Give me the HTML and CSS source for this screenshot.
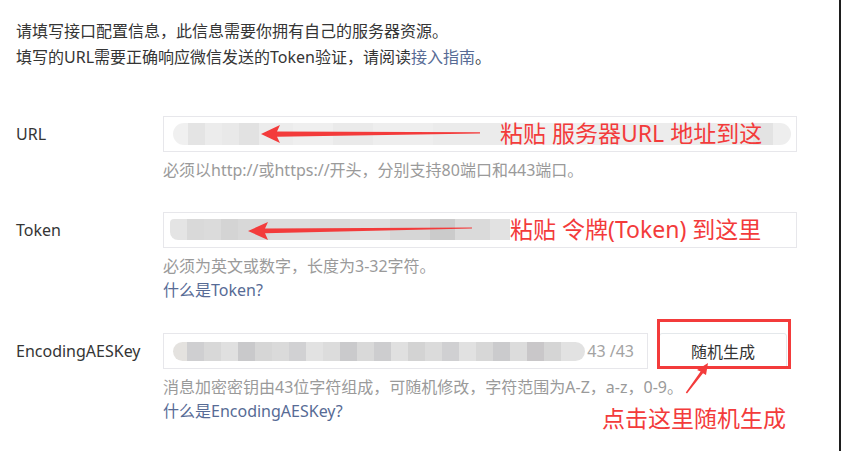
FILE: index.html
```html
<!DOCTYPE html>
<html lang="zh-CN">
<head>
    <meta charset="UTF-8">
    <meta name="viewport" content="width=device-width, initial-scale=1.0">
    <title>服务器配置</title>
    <link rel="stylesheet" href="styles.css">
</head>
<body>
    <div class="page">
        <div class="intro">
            <p>请填写接口配置信息，此信息需要你拥有自己的服务器资源。</p>
            <p>填写的URL需要正确响应微信发送的Token验证，请阅读<a href="#">接入指南</a>。</p>
        </div>

        <div class="form">
            <div class="row">
                <label class="label">URL</label>
                <div class="field">
                    <div class="input">
                        <div class="blur blur-url"></div>
                        <svg class="arrow arrow-url" width="225" height="24" viewBox="0 0 225 24">
                            <polygon points="2,12 21,3 18,9.5 221,10.3 221,11.5 18,14.8 21,21"/>
                        </svg>
                        <span class="note note-url">粘贴 服务器URL 地址到这</span>
                    </div>
                    <p class="tip">必须以http://或https://开头，分别支持80端口和443端口。</p>
                </div>
            </div>

            <div class="row">
                <label class="label">Token</label>
                <div class="field">
                    <div class="input">
                        <div class="blur blur-token"></div>
                        <svg class="arrow arrow-token" width="230" height="26" viewBox="0 0 230 26">
                            <polygon points="2,13 22,4 19,10.5 226,9.4 226,10.6 19,15.2 22,22"/>
                        </svg>
                        <span class="note note-token">粘贴 令牌(Token) 到这里</span>
                    </div>
                    <p class="tip">必须为英文或数字，长度为3-32字符。</p>
                    <a class="tip-link" href="#">什么是Token?</a>
                </div>
            </div>

            <div class="row">
                <label class="label">EncodingAESKey</label>
                <div class="field">
                    <div class="field-line">
                        <div class="input input-aes">
                            <div class="blur blur-aes"></div>
                            <span class="counter">43 /43</span>
                        </div>
                        <div class="btn-wrap">
                            <button class="btn" type="button">随机生成</button>
                            <span class="mark"></span>
                        </div>
                    </div>
                    <p class="tip">消息加密密钥由43位字符组成，可随机修改，字符范围为A-Z，a-z，0-9。</p>
                    <a class="tip-link" href="#">什么是EncodingAESKey?</a>
                </div>
            </div>
        </div>

        <div class="callout">
            <svg class="callout-arrow" width="35" height="40" viewBox="0 0 35 40">
                <polygon points="28,5 26,17 23,15.2 7,35.5 5.8,34.6 20.6,13.6 17,12"/>
            </svg>
            <span class="callout-text">点击这里随机生成</span>
        </div>
    </div>
</body>
</html>
```

FILE: styles.css
```css
* {
    box-sizing: border-box;
}
body {
    margin: 0;
    background-color: #ffffff;
    font-family: 'Noto Sans', 'Noto Sans CJK SC', sans-serif;
    color: #353535;
}
.page {
    position: relative;
    width: 841px;
    height: 451px;
    padding: 18px 0 0 16px;
    border-right: 2px solid #1e1e1e;
    overflow: hidden;
}
.intro p {
    margin: 0;
    font-size: 16px;
    line-height: 26px;
}
.intro a {
    color: #576b95;
    text-decoration: none;
}
.form {
    margin-top: 46px;
}
.row {
    display: flex;
    margin-bottom: 30px;
}
.label {
    width: 147px;
    flex-shrink: 0;
    font-size: 16px;
    line-height: 36px;
}
.field {
    display: flex;
    flex-direction: column;
    align-items: flex-start;
}
.field-line {
    display: flex;
    gap: 11px;
}
.input {
    position: relative;
    width: 634px;
    height: 36px;
    border: 1px solid #e7e7eb;
    background-color: #ffffff;
}
.input-aes {
    width: 485px;
}
.tip {
    margin: 6px 0 0;
    font-size: 16px;
    line-height: 24px;
    color: #9a9a9a;
}
.tip-link {
    font-size: 16px;
    line-height: 25px;
    color: #576b95;
    text-decoration: none;
}

/* blurred field contents */
.blur {
    position: absolute;
}
.blur-url {
    left: 9px;
    top: 6px;
    width: 618px;
    height: 22px;
    border-radius: 11px 11px 11px 11px;
    background: linear-gradient(to right,
        #f0f0f0 0 15px, #e4e4e4 15px 32px, #ececec 32px 49px, #e9e9e9 49px 66px,
        #e2e2e2 66px 86px, #ececec 86px 120px, #efefef 120px 160px, #eaeaea 160px 200px,
        #eeeeee 200px 260px, #ebebeb 260px 330px, #f0f0f0 330px 420px, #ececec 420px 520px,
        #ebebeb 520px 580px, #e3e3e3 580px 600px, #eeeeee 600px);
}
.blur-token {
    left: 6px;
    top: 6px;
    width: 340px;
    height: 21px;
    border-radius: 4px 0 0 8px;
    background: linear-gradient(to right,
        #e4e4e4 0 17px, #d9d9d9 17px 34px, #dbdbdb 34px 51px, #d4d4d4 51px 68px,
        #d8d8d8 68px 100px, #dcdcdc 100px 140px, #d9d9d9 140px 180px, #dedede 180px 220px,
        #d6d6d6 220px 260px, #cbcbcb 260px 285px, #dadada 285px 320px, #e2e2e2 320px);
}
.blur-aes {
    left: 9px;
    top: 8px;
    width: 412px;
    height: 19px;
    border-radius: 10px;
    background: linear-gradient(to right,
        #e4e2df 0 14px, #cfcfd1 14px 31px, #d8d8d8 31px 48px, #e0e0e0 48px 65px,
        #c9c9cb 65px 82px, #d6d6d6 82px 99px, #dadada 99px 116px, #d1d1d3 116px 133px,
        #e2e2e2 133px 150px, #dcdcdc 150px 167px, #cacacc 167px 184px, #d9d9d9 184px 201px,
        #cdcdcf 201px 218px, #e0e0e0 218px 235px, #d3d3d3 235px 252px, #dbdbdb 252px 269px,
        #d0d0d2 269px 286px, #e1e1e1 286px 303px, #d7d7d7 303px 320px, #cbcbcd 320px 337px,
        #dcdcdc 337px 354px, #c9c7c9 354px 371px, #d5d5d5 371px 388px, #e2e2e2 388px);
}
.counter {
    position: absolute;
    right: 13px;
    top: 0;
    font-size: 16px;
    line-height: 34px;
    color: #a3a3a3;
}

/* red annotations */
.arrow {
    position: absolute;
    fill: #f33b3b;
}
.arrow-url {
    left: 95px;
    top: 5px;
}
.arrow-token {
    left: 82px;
    top: 5px;
}
.note {
    position: absolute;
    top: 0;
    font-size: 23px;
    line-height: 33px;
    color: #f33b3b;
    white-space: nowrap;
}
.note-url {
    left: 336px;
}
.note-token {
    left: 346px;
}
.btn-wrap {
    position: relative;
}
.btn {
    width: 128px;
    height: 36px;
    border: 1px solid #e4e8eb;
    border-radius: 3px;
    background-color: #ffffff;
    font-family: inherit;
    font-size: 16px;
    color: #353535;
}
.mark {
    position: absolute;
    left: -2px;
    top: -14px;
    right: -4px;
    bottom: 0;
    border: 3px solid #f33b3b;
}
.callout {
    position: absolute;
    left: 600px;
    top: 358px;
    width: 200px;
    height: 80px;
}
.callout-arrow {
    position: absolute;
    left: 80px;
    top: 0;
    fill: #f33b3b;
}
.callout-text {
    position: absolute;
    left: 2px;
    top: 44px;
    font-size: 23px;
    line-height: 32px;
    color: #f33b3b;
    white-space: nowrap;
}
```
